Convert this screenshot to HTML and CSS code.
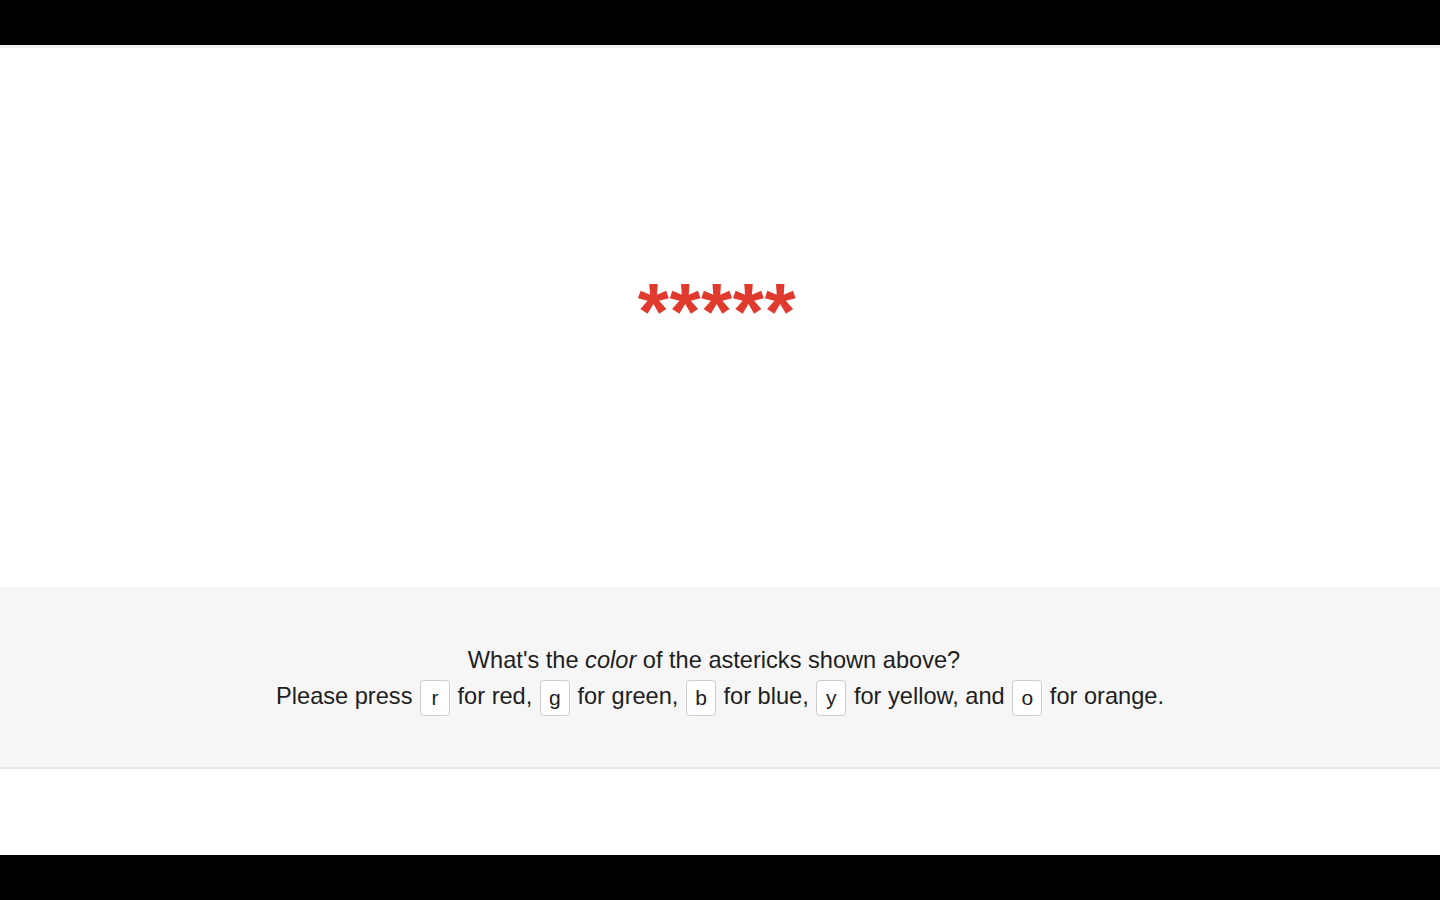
FILE: index.html
```html
<!DOCTYPE html>
<html>
<head>
<meta charset="utf-8">
<link rel="stylesheet" href="styles.css">
</head>
<body>
<div class="frame">
  <div class="bar top"></div>
  <div class="page">
    <div class="stage">
      <div class="stimulus">*****</div>
    </div>
    <div class="prompt">
      <p class="q">What's the <em>color</em> of the astericks shown above?</p>
      <p class="keys">Please press <span class="key">r</span> for red, <span class="key">g</span> for green, <span class="key">b</span> for blue, <span class="key">y</span> for yellow, and <span class="key">o</span> for orange.</p>
    </div>
    <div class="rest"></div>
  </div>
  <div class="bar bottom"></div>
</div>
</body>
</html>
```
FILE: styles.css
```css
html, body {
  margin: 0;
  padding: 0;
  background: #000;
}
.frame {
  width: 1440px;
  height: 900px;
  display: flex;
  flex-direction: column;
  font-family: "Liberation Sans", Arial, sans-serif;
  color: #1e1e1e;
}
.bar {
  background: #000;
}
.bar.top { height: 45px; }
.bar.bottom { height: 45px; }
.page {
  flex: 1;
  background: #fff;
  display: flex;
  flex-direction: column;
  border-top: 3px solid #f0f0f0;
}
.stage {
  height: 539px;
  display: flex;
  justify-content: center;
  align-items: center;
}
.stimulus {
  color: #e03a2e;
  font-weight: bold;
  font-size: 80px;
  letter-spacing: 0.6px;
  line-height: 1;
  padding-bottom: 12px;
  padding-right: 6px;
}
.prompt {
  height: 182px;
  background: #f6f6f6;
  border-bottom: 2px solid #e8e8e8;
  display: flex;
  flex-direction: column;
  align-items: center;
  justify-content: center;
  padding-top: 6px;
  box-sizing: border-box;
  font-size: 23.6px;
}
.prompt p {
  margin: 0;
}
.q {
  line-height: 32px;
  padding-right: 12px;
}
.keys {
  line-height: 40px;
}
.key {
  display: inline-block;
  background: #fff;
  border: 1px solid #ccc;
  border-radius: 4px;
  width: 28px;
  height: 34px;
  line-height: 34px;
  text-align: center;
  vertical-align: middle;
  font-size: 21px;
  margin: 0 1px;
}
.rest {
  flex: 1;
}
```
